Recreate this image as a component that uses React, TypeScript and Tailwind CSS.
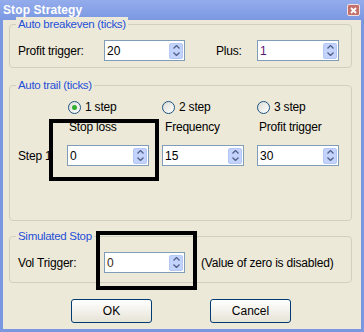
import React from 'react'

const font = { fontFamily: '"Liberation Sans", Arial, sans-serif' }

const Spin = () => (
  <div className="flex flex-col w-[14px] h-[16px] rounded-[2px] bg-[#c3d3fd] border border-[#b4c8f6]">
    <div className="flex-1 flex items-center justify-center">
      <svg width="7" height="4" viewBox="0 0 7 4"><path d="M0.5 3.5 L3.5 0.5 L6.5 3.5" fill="none" stroke="#4d6185" strokeWidth="1.3" /></svg>
    </div>
    <div className="flex-1 flex items-center justify-center">
      <svg width="7" height="4" viewBox="0 0 7 4"><path d="M0.5 0.5 L3.5 3.5 L6.5 0.5" fill="none" stroke="#4d6185" strokeWidth="1.3" /></svg>
    </div>
  </div>
)

const NumBox = ({ value, color = 'text-black', w = 'w-[82px]' }: { value: string; color?: string; w?: string }) => (
  <div className={`${w} h-[21px] bg-white border border-[#7f9db9] flex items-center pl-[2px] pr-[1px]`}>
    <span className={`flex-1 text-[12px] ${color}`}>{value}</span>
    <Spin />
  </div>
)

const Radio = ({ checked, label }: { checked?: boolean; label: string }) => (
  <div className="flex items-center gap-[4px] h-[14px]">
    <div className="w-[13px] h-[13px] rounded-full border border-[#1d5281] bg-gradient-to-br from-[#dcdcd6] to-white flex items-center justify-center">
      {checked && <div className="w-[5px] h-[5px] rounded-full bg-[#2fae2f]" />}
    </div>
    <span className="text-[12px] tracking-[-0.2px] text-black">{label}</span>
  </div>
)

const Group = ({ title, className, children }: { title: string; className: string; children: React.ReactNode }) => (
  <div className={`relative ml-[6px] w-[343px] border border-[#d0d0bf] rounded-[4px] ${className}`}>
    <span className="absolute -top-[8px] left-[6px] px-[2px] bg-[#ece9d8] text-[11.5px] tracking-[-0.3px] leading-[14px] text-[#1f4fd9]">{title}</span>
    {children}
  </div>
)

const XpButton = ({ label }: { label: string }) => (
  <button className="w-[81px] h-[24px] rounded-[3px] border border-[#003c74] bg-gradient-to-b from-white to-[#e6e3d6] text-[12px] text-black">
    {label}
  </button>
)

const lbl = 'text-[12px] tracking-[-0.2px] text-black'

export default function App() {
  return (
    <div style={font} className="w-[364px] h-[332px] flex flex-col bg-[#7a97e1] px-[3px] pb-[3px]">
      <div className="h-[20px] shrink-0 flex items-center justify-between -mx-[3px] px-[3px] bg-gradient-to-b from-[#93acec] to-[#7b98e2]">
        <span className="text-white font-bold text-[12px] leading-none tracking-[0.1px]">Stop Strategy</span>
        <div className="w-[13px] h-[12px] mr-[1px] rounded-[2px] border border-[#f0e0e0] bg-[#c4706c] flex items-center justify-center">
          <svg width="7" height="7" viewBox="0 0 7 7"><path d="M1 1 L6 6 M6 1 L1 6" stroke="white" strokeWidth="1.8" /></svg>
        </div>
      </div>
      <div className="relative flex-1 bg-[#ece9d8] flex flex-col pt-[4px]">
        <Group title="Auto breakeven (ticks)" className="h-[44px]">
          <div className="flex items-center pl-[8px] pt-[15px]">
            <span className={`w-[86px] ${lbl}`}>Profit trigger:</span>
            <NumBox value="20" w="w-[81px]" />
            <span className={`ml-[31px] w-[41px] ${lbl}`}>Plus:</span>
            <NumBox value="1" color="text-[#5b1476]" />
          </div>
        </Group>

        <Group title="Auto trail (ticks)" className="mt-[17px] h-[136px]">
          <div className="grid grid-cols-[49px_95px_95px_82px] pl-[8px] pt-[14px]">
            <div />
            <div className="pl-[1px]"><Radio checked label="1 step" /></div>
            <div><Radio label="2 step" /></div>
            <div><Radio label="3 step" /></div>

            <div />
            <div className={`pl-[2px] pt-[4px] ${lbl}`}>Stop loss</div>
            <div className={`pl-[3px] pt-[4px] ${lbl}`}>Frequency</div>
            <div className={`pl-[2px] pt-[4px] ${lbl}`}>Profit trigger</div>

            <div className={`flex items-center mt-[9px] ${lbl}`}>Step 1</div>
            <div className="mt-[9px]"><NumBox value="0" /></div>
            <div className="mt-[9px]"><NumBox value="15" /></div>
            <div className="mt-[9px]"><NumBox value="30" /></div>
          </div>
        </Group>

        <Group title="Simulated Stop" className="mt-[15px] h-[47px]">
          <div className="flex items-center pl-[8px] pt-[15px]">
            <span className={`w-[86px] ${lbl}`}>Vol Trigger:</span>
            <NumBox value="0" w="w-[81px]" color="text-[#3a2a10]" />
            <span className={`ml-[16px] ${lbl}`}>(Value of zero is disabled)</span>
          </div>
        </Group>

        <div className="flex pl-[68px] gap-[58px] mt-[16px]">
          <XpButton label="OK" />
          <XpButton label="Cancel" />
        </div>

        <div className="absolute left-[46px] top-[99px] w-[110px] h-[62px] border-[4px] border-black" />
        <div className="absolute left-[93px] top-[211px] w-[101px] h-[59px] border-[4px] border-black" />
      </div>
    </div>
  )
}
